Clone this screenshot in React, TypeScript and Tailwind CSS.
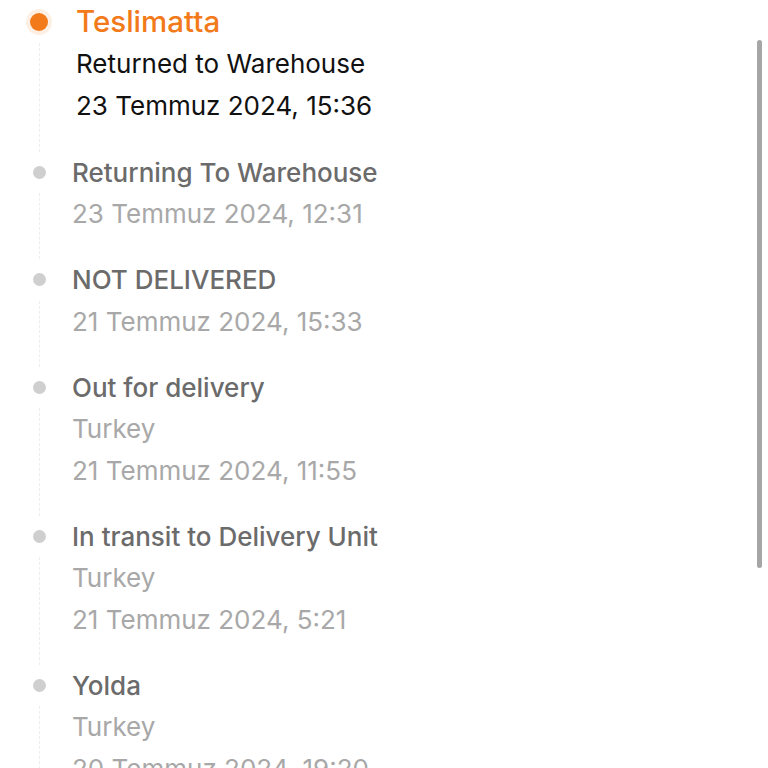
import React from 'react';

interface Olay {
  baslik: string;
  satirlar: string[];
}

const gecmis: Olay[] = [
  { baslik: 'Returning To Warehouse', satirlar: ['23 Temmuz 2024, 12:31'] },
  { baslik: 'NOT DELIVERED', satirlar: ['21 Temmuz 2024, 15:33'] },
  { baslik: 'Out for delivery', satirlar: ['Turkey', '21 Temmuz 2024, 11:55'] },
  { baslik: 'In transit to Delivery Unit', satirlar: ['Turkey', '21 Temmuz 2024, 5:21'] },
  { baslik: 'Yolda', satirlar: ['Turkey', '20 Temmuz 2024, 19:20'] },
];

export default function App() {
  return (
    <div
      className="relative w-[768px] h-[768px] overflow-hidden bg-white"
      style={{ fontFamily: 'Inter, "Noto Sans", sans-serif' }}
    >
      <div className="flex flex-col">
        {/* Aktif durum */}
        <div className="flex">
          <div className="w-[78px] shrink-0 flex flex-col items-center">
            <div className="h-[43px] flex items-center">
              <span className="block w-[18px] h-[18px] rounded-full bg-[#f27a1a] shadow-[0_0_0_4px_rgba(242,122,26,0.12)]" />
            </div>
            <div className="flex-1 border-l-[1.5px] border-dashed border-[#ededed]" />
          </div>
          <div className="pb-[25.5px] -ml-[2px]">
            <div className="text-[29.5px] leading-[43px] font-medium text-[#f27a1a]">Teslimatta</div>
            <div className="text-[26px] leading-[41.5px] text-[#111111]">Returned to Warehouse</div>
            <div className="text-[26px] leading-[41.5px] text-[#111111]">23 Temmuz 2024, 15:36</div>
          </div>
        </div>

        {gecmis.map((o) => (
          <div key={o.baslik} className="flex">
            <div className="w-[78px] shrink-0 flex flex-col items-center">
              <div className="h-[41.5px] flex items-center">
                <span className="block w-[13px] h-[13px] rounded-full bg-[#cfcfcf]" />
              </div>
              <div className="flex-1 border-l-[1.5px] border-dashed border-[#ededed]" />
            </div>
            <div className="pb-[24.5px] -ml-[6px]">
              <div className="text-[26px] leading-[41.5px] font-medium text-[#6b6b6b]">{o.baslik}</div>
              {o.satirlar.map((s) => (
                <div key={s} className="text-[26px] leading-[41.5px] text-[#a8a8a8]">
                  {s}
                </div>
              ))}
            </div>
          </div>
        ))}
      </div>

      {/* kaydirma cubugu */}
      <div className="absolute right-[6px] top-[40px] w-[5px] h-[528px] rounded-full bg-[#a6a6a6]" />
    </div>
  );
}
